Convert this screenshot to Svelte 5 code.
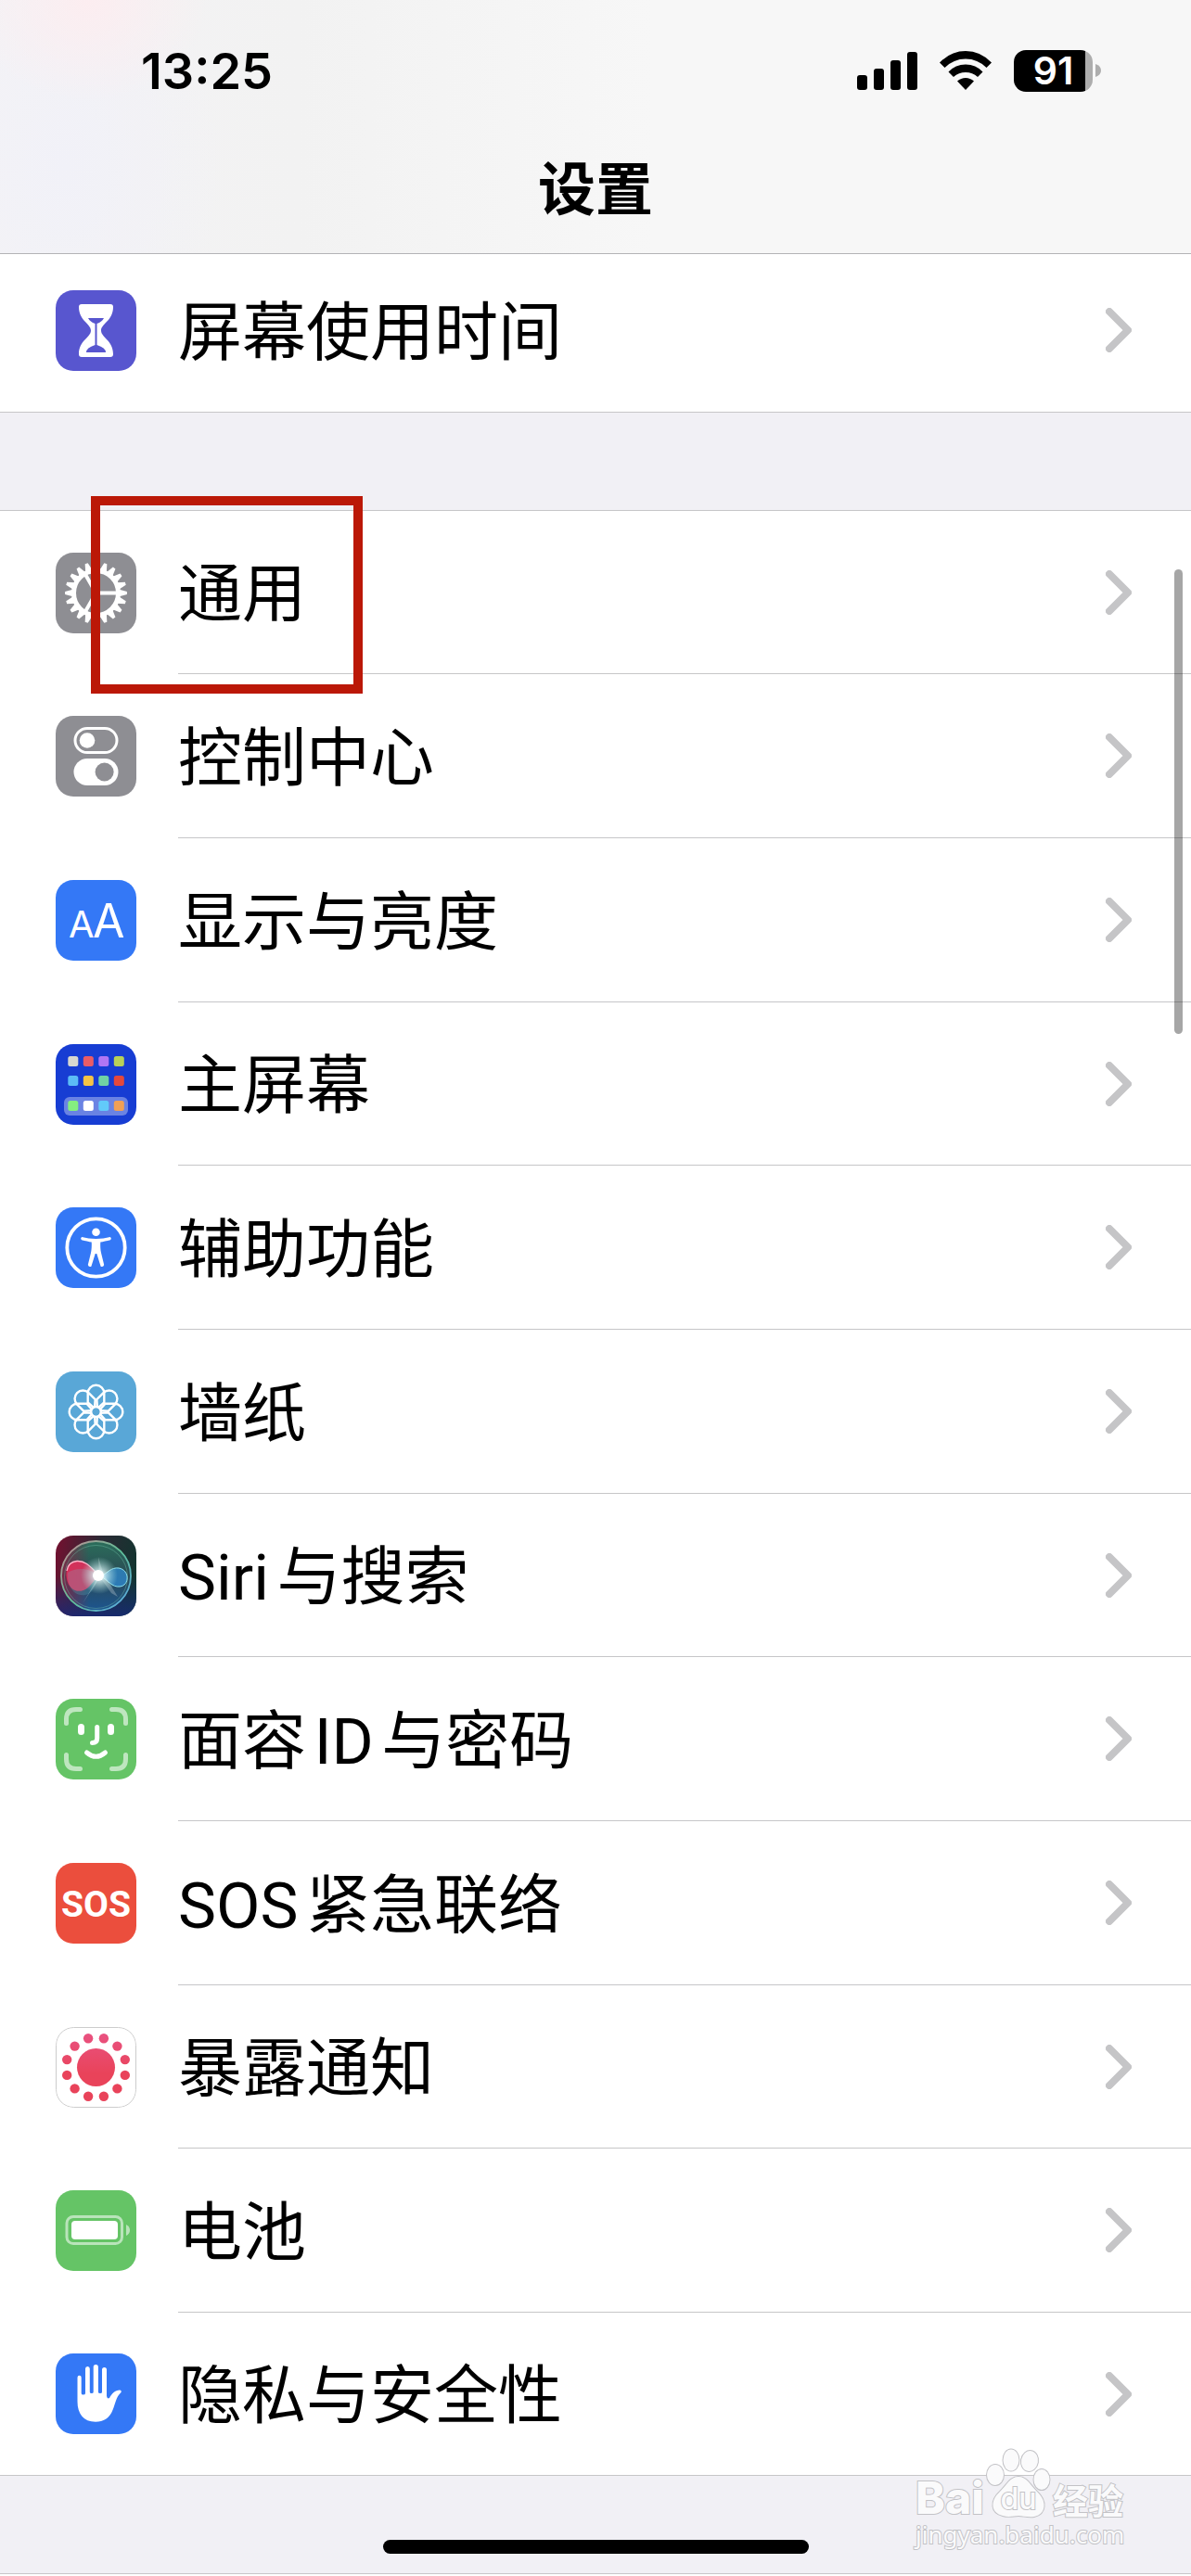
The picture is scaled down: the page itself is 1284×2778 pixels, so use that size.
<script lang="ts">
  type Item = { id: string; label: string; marked?: boolean };

  const time = "13:25";
  const battery = 91;

  const screenTime: Item[] = [{ id: "screen-time", label: "屏幕使用时间" }];

  const general: Item[] = [
    { id: "general", label: "通用", marked: true },
    { id: "control", label: "控制中心" },
    { id: "display", label: "显示与亮度" },
    { id: "home", label: "主屏幕" },
    { id: "access", label: "辅助功能" },
    { id: "wallpaper", label: "墙纸" },
    { id: "siri", label: "Siri与搜索" },
    { id: "faceid", label: "面容ID与密码" },
    { id: "sos", label: "SOS紧急联络" },
    { id: "exposure", label: "暴露通知" },
    { id: "battery", label: "电池" },
    { id: "privacy", label: "隐私与安全性" },
  ];

  const range = (n: number) => Array.from({ length: n }, (_, i) => i);

  // app tiles of the home screen icon, row by row
  const tiles = [
    { y: 13, colors: ["#d8d8d0", "#ea5c66", "#b076f4", "#b8d158"] },
    { y: 34, colors: ["#5cbcf6", "#f6c445", "#70d3a4", "#e5483b"] },
    { y: 61, colors: ["#85ee80", "#ffffff", "#62cafa", "#f0a055"] },
  ];
</script>

{#snippet glyph(id: string)}
  {#if id === "screen-time"}
    <path fill="#fff" d="M28 15H59Q62 15 62 18C62 33 49 36 49 43.5C49 51 62 54 62 69Q62 72 59 72H28Q25 72 25 69C25 54 38 51 38 43.5C38 36 25 33 25 18Q25 15 28 15Z" />
    <path fill="#5856cf" d="M35 30H52Q50 34 44.5 36V59Q54 62 54 67H33Q33 62 42.5 59V36Q37 34 35 30Z" />
  {:else if id === "general"}
    <g transform="translate(43.5 43.5)">
      {#each range(20) as i}
        <path fill="#fff" d="M25-3.8L33.4-1.6V1.6L25 3.8Z" transform="rotate({i * 18})" />
      {/each}
      <circle r="24" fill="none" stroke="#fff" stroke-width="5" />
      {#each range(3) as i}
        <path stroke="#fff" stroke-width="4" d="M0 0H23" transform="rotate({i * 120})" />
      {/each}
    </g>
  {:else if id === "control"}
    <rect x="21" y="13.5" width="45" height="26" rx="13" fill="none" stroke="#fff" stroke-width="3" />
    <circle cx="34" cy="26.5" r="8.3" fill="#fff" />
    <rect x="19.5" y="46" width="48" height="29" rx="14.5" fill="#fff" />
    <circle cx="52.6" cy="60.5" r="10" fill="#8e8e93" />
  {:else if id === "display"}
    <text class="aa" x="14" y="62" font-size="40">A</text>
    <text class="aa" x="40" y="62" font-size="50">A</text>
  {:else if id === "home"}
    <rect x="9" y="57" width="69" height="20" rx="6" fill="#fff" opacity="0.36" />
    {#each tiles as row}
      {#each row.colors as color, i}
        <rect x={13.3 + i * 16.5} y={row.y} width="11" height="11" rx="2.5" fill={color} />
      {/each}
    {/each}
  {:else if id === "access"}
    <circle cx="43.5" cy="43.5" r="31.2" fill="none" stroke="#fff" stroke-width="3.8" />
    <circle cx="43.5" cy="26.7" r="4.3" fill="#fff" />
    <path fill="#fff" d="M28.3 32C33 33 38 34 43.5 34C49 34 54 33 58.7 32Q60.8 33.4 59 35.2C55 36.3 51 37 48.3 37.5C48 41 48.3 46 49 49L52.2 62Q51.4 65 48.6 63.7L44.3 50H42.7L38.4 63.7Q35.6 65 34.8 62L38 49C38.7 46 39 41 38.7 37.5C36 37 32 36.3 28 35.2Q26.2 33.4 28.3 32Z" />
  {:else if id === "wallpaper"}
    <g transform="translate(43.5 43.5)" fill="none" stroke="#fff" stroke-width="2.4">
      {#each range(8) as i}
        <path d="M-2-4L-8.8-10V-20A8.8 8.8 0 0 1 8.8-20V-10L2-4" transform="rotate({i * 45})" />
      {/each}
      <circle r="5.4" />
    </g>
  {:else if id === "siri"}
    <defs>
      <linearGradient id="siri-back" x1="0" y1="0.3" x2="1" y2="0.5">
        <stop offset="0" stop-color="#6e1230" />
        <stop offset="0.5" stop-color="#2b2a35" />
        <stop offset="1" stop-color="#12352f" />
      </linearGradient>
      <linearGradient id="siri-low" x1="0" y1="0" x2="0" y2="1">
        <stop offset="0.5" stop-color="#17307c" stop-opacity="0" />
        <stop offset="1" stop-color="#17287c" stop-opacity="0.8" />
      </linearGradient>
      <linearGradient id="siri-rim" x1="0" y1="0" x2="1" y2="1">
        <stop offset="0" stop-color="#c98a95" />
        <stop offset="0.5" stop-color="#5fbf96" />
        <stop offset="1" stop-color="#5aa6ea" />
      </linearGradient>
      <linearGradient id="siri-orb" x1="0" y1="0" x2="0" y2="1">
        <stop offset="0" stop-color="#2b6e5a" />
        <stop offset="0.5" stop-color="#2a4a55" />
        <stop offset="1" stop-color="#1c5590" />
      </linearGradient>
      <linearGradient id="siri-side" x1="0" y1="0" x2="1" y2="0">
        <stop offset="0" stop-color="#8e1f42" stop-opacity="0.8" />
        <stop offset="0.4" stop-color="#8e1f42" stop-opacity="0" />
      </linearGradient>
      <radialGradient id="siri-glow">
        <stop offset="0" stop-color="#fff" />
        <stop offset="0.25" stop-color="#e8ffff" stop-opacity="0.8" />
        <stop offset="1" stop-color="#a8e8e0" stop-opacity="0" />
      </radialGradient>
    </defs>
    <rect width="87" height="87" fill="url(#siri-back)" />
    <rect width="87" height="87" fill="url(#siri-low)" />
    <circle cx="43.5" cy="43.5" r="37.5" fill="url(#siri-orb)" />
    <circle cx="43.5" cy="43.5" r="37.5" fill="url(#siri-side)" stroke="url(#siri-rim)" stroke-width="1.8" />
    <circle cx="43.5" cy="44.5" r="34" fill="none" stroke="#78c8b0" stroke-width="0.8" opacity="0.5" />
    <path fill="#e0305c" opacity="0.9" d="M48 43C38 34 33 27 23 27.5C14 28 10 36 12 47C14 57 22 62 30 59C38 56 40 48 48 43Z" />
    <path fill="none" stroke="#ffb5cb" stroke-width="1.4" d="M46 42C37 33 32 27 23 27.5C17 28 13 32 12 38" />
    <path fill="#64c8d8" opacity="0.22" d="M48 44C36 34 22 34 13 40C12 55 20 66 32 64C42 62 42 51 48 44Z" />
    <path fill="#2f8fd8" opacity="0.7" d="M49 44C56 40 60 34 68 35C80 37 80 54 69 55C61 56 56 48 49 44Z" />
    <path fill="none" stroke="#8fe4f2" stroke-width="1" d="M49 44C56 40 60 34 68 35C80 37 80 54 69 55C61 56 56 48 49 44Z" />
    <path fill="#fff" opacity="0.25" d="M47 43L46 23L51 40L67 66L60 62L48 45L29 73Z" />
    <circle cx="47" cy="43" r="20" fill="url(#siri-glow)" />
    <circle cx="46" cy="43" r="6" fill="#fff" />
  {:else if id === "faceid"}
    <g fill="none" stroke="#fff" stroke-width="5" stroke-linecap="round">
      <path opacity="0.58" d="M11.5 26.5V22Q11.5 11.5 22 11.5H26.5M60.5 11.5H65Q75.5 11.5 75.5 22V26.5M75.5 60.5V65Q75.5 75.5 65 75.5H60.5M26.5 75.5H22Q11.5 75.5 11.5 65V60.5" />
      <path d="M44.7 30.5V42.5Q44.7 47.5 39.5 47.5" />
      <path d="M33.5 58Q43.5 66.5 53.5 58" />
      <path stroke-width="7" d="M27.5 30.5V35.5M59.5 30.5V35.5" />
    </g>
  {:else if id === "sos"}
    <text class="sos-text" x="43.5" y="58">SOS</text>
  {:else if id === "exposure"}
    <defs>
      <linearGradient id="exposure-fill" gradientUnits="userSpaceOnUse" x1="0" y1="8" x2="0" y2="50">
        <stop offset="0" stop-color="#e95280" />
        <stop offset="1" stop-color="#e9435a" />
      </linearGradient>
    </defs>
    <rect x="0.5" y="0.5" width="86" height="86" rx="19" fill="#fff" stroke="#ccc" />
    <g fill="url(#exposure-fill)">
      <circle cx="43.5" cy="43.5" r="20.5" />
      {#each range(12) as i}
        <circle
          cx={43.5 + 32.4 * Math.sin(((i * 30 + 15) * Math.PI) / 180)}
          cy={43.5 - 32.4 * Math.cos(((i * 30 + 15) * Math.PI) / 180)}
          r="5.2"
        />
      {/each}
    </g>
  {:else if id === "battery"}
    <rect x="12" y="28.5" width="59.5" height="29" rx="7" fill="none" stroke="#fff" stroke-width="3" opacity="0.55" />
    <rect x="17" y="33" width="50" height="20" rx="4" fill="#fff" />
    <path fill="#fff" opacity="0.55" d="M76 37Q80 39 80 43T76 49Z" />
  {:else if id === "privacy"}
    <path fill="#fff" d="M23.5 26Q23.5 23.7 25.6 23.7T27.7 26V43Q27.7 44.5 29.8 44.5T32 43V16.5Q32 14 34.4 14T36.8 16.5V41.5Q36.8 43 38.8 43T40.7 41.5V14.5Q40.7 12 43.3 12T45.9 14.5V41.5Q45.9 43 48 43T50 41.5V17.5Q50 15 52.5 15T55 17.5V46Q55.5 49.5 58 48C60.5 43.5 64 39.5 69 39.5Q71.5 40 70.5 42C65 47 64.5 54 61.5 61C58 70 51.5 73.7 43 73.7C30 73.7 23.5 65 23.5 52Z" />
  {/if}
{/snippet}

{#snippet rows(items: Item[])}
  <ul class="group">
    {#each items as item}
      <li class="row">
        <a class="link" href="#{item.id}">
          <svg class="icon {item.id}" viewBox="0 0 87 87" aria-hidden="true">
            {@render glyph(item.id)}
          </svg>
          <span class="cell">
            <span class="label">{item.label}</span>
            <svg class="chevron" viewBox="0 0 28 48" aria-hidden="true">
              <path d="M4 4L24 24L4 44" />
            </svg>
          </span>
        </a>
        {#if item.marked}
          <span class="marker"></span>
        {/if}
      </li>
    {/each}
  </ul>
{/snippet}

<div class="screen">
  <header class="header">
    <div class="status">
      <span class="time">{time}</span>
      <div class="indicators">
        <svg class="signal" viewBox="0 0 65 45" aria-hidden="true">
          <rect x="0" y="27" width="11" height="16" rx="3" />
          <rect x="18" y="20" width="11" height="23" rx="3" />
          <rect x="36" y="11" width="11" height="32" rx="3" />
          <rect x="54" y="2" width="11" height="41" rx="3" />
        </svg>
        <svg class="wifi" viewBox="0 0 58 45" aria-hidden="true">
          <path d="M1 13.5Q13 1 29 1T57 13.5L51.5 19Q42 9.5 29 9.5T6.5 19Z" />
          <path d="M10.5 23.5Q18 15.5 29 15.5T47.5 23.5L42 29Q36.500 24 29 24T16 29Z" />
          <path d="M20 33.5Q24 30 29 30T38 33.5L29 43Z" />
        </svg>
        <div class="battery-box">
          <span class="level">{battery}</span>
          <svg class="nub" viewBox="0 0 6 14" aria-hidden="true">
            <path d="M0 0Q6 2 6 7T0 14Z" />
          </svg>
        </div>
      </div>
    </div>
    <h1 class="title">设置</h1>
  </header>

  <main class="content">
    {@render rows(screenTime)}
    {@render rows(general)}
    <div class="group next"></div>
  </main>

  <div class="scrollbar"></div>
  <div class="home-bar"></div>

  <svg class="watermark" viewBox="0 0 240 120" aria-label="Baidu 经验">
    <g class="paw">
      <ellipse cx="89" cy="31" rx="9" ry="11" />
      <ellipse cx="106" cy="15" rx="8.5" ry="11.5" />
      <ellipse cx="126" cy="16" rx="9" ry="11" transform="rotate(10 126 16)" />
      <ellipse cx="139" cy="36" rx="8.5" ry="11" />
      <path d="M114 33C123 33 126 41 134 49C145 59 144 73 131 76C124 77 119 75 114 75S104 77 97 75C84 72 83 59 94 49C102 41 105 33 114 33Z" />
    </g>
    <text class="brand" x="3" y="73">Bai</text>
    <text class="du" x="114" y="68">du</text>
    <text class="brand-cn" x="151" y="73">经验</text>
    <text class="site" x="3" y="105">jingyan.baidu.com</text>
  </svg>
</div>

<style>
  :global(body) {
    margin: 0;
    background: #f1f0f5;
  }

  .screen {
    position: relative;
    display: flex;
    flex-direction: column;
    min-height: 100vh;
    overflow: hidden;
    background: #f1f0f5;
    color: #000;
    font-family: Inter, "Noto Sans CJK SC", sans-serif;
  }

  .header {
    position: relative;
    z-index: 1;
    box-sizing: border-box;
    height: 274px;
    border-bottom: 1px solid #b3b3b6;
    background:
      radial-gradient(ellipse 130px 110px at 95px 0, #fcedf0, transparent),
      radial-gradient(ellipse 170px 240px at 70px 180px, #f1f1f8, transparent),
      linear-gradient(90deg, #f4f3f5, #f2f2f2 25%, #f7f7f7 55%);
  }

  .status {
    display: flex;
    align-items: center;
    justify-content: space-between;
    height: 76px;
    padding: 38px 97px 0 152px;
  }

  .time {
    padding-top: 2px;
    font-size: 54px;
    line-height: 76px;
    font-weight: 600;
  }

  .indicators {
    display: flex;
    align-items: center;
    gap: 23px;
  }

  .signal {
    width: 65px;
    height: 45px;
  }

  .wifi {
    width: 58px;
    height: 45px;
  }

  .battery-box {
    display: flex;
    align-items: center;
    gap: 3px;
  }

  .level {
    width: 85px;
    height: 45px;
    border-radius: 13px;
    background: linear-gradient(90deg, #000 77px, #adadad 77px);
    color: #fff;
    font-size: 41px;
    line-height: 45px;
    font-weight: 600;
    text-align: center;
  }

  .nub {
    width: 6px;
    height: 14px;
    fill: #adadad;
  }

  .title {
    margin: 46px 0 0;
    font-size: 62px;
    line-height: 90px;
    font-weight: 700;
    text-align: center;
  }

  .content {
    display: flex;
    flex: 1;
    flex-direction: column;
    gap: 105px;
    /* the list is scrolled a little way under the header */
    margin-top: -7px;
  }

  .group {
    margin: 0;
    padding: 0;
    list-style: none;
    border-top: 1px solid #c6c6c8;
    border-bottom: 1px solid #c6c6c8;
    background: #fff;
  }

  .next {
    flex: 1;
    border-bottom: none;
  }

  .row {
    position: relative;
    height: 177px;
  }

  .row:nth-child(3n + 1) {
    height: 176px;
  }

  .row:last-child {
    height: 175px;
  }

  .row:only-child {
    height: 176px;
  }

  .link {
    display: flex;
    align-items: center;
    height: 100%;
    padding-left: 60px;
    color: inherit;
    text-decoration: none;
  }

  .icon {
    flex: none;
    width: 87px;
    height: 87px;
    border-radius: 19px;
  }

  .cell {
    display: flex;
    flex: 1;
    align-items: center;
    justify-content: space-between;
    box-sizing: border-box;
    height: 100%;
    margin-left: 45px;
    padding-right: 64px;
    border-bottom: 1px solid #c6c6c8;
  }

  .row:last-child .cell {
    border-bottom: none;
  }

  .label {
    padding-top: 7px;
    font-family: Roboto, "Noto Sans CJK SC", sans-serif;
    font-size: 69px;
    line-height: 100px;
    text-autospace: normal;
  }

  .chevron {
    width: 28px;
    height: 48px;
    fill: none;
    stroke: #c5c5c7;
    stroke-width: 8;
    stroke-linecap: round;
    stroke-linejoin: round;
  }

  .marker {
    position: absolute;
    top: -16px;
    left: 98px;
    box-sizing: border-box;
    width: 293px;
    height: 213px;
    border: 10px solid #bb1807;
  }

  .screen-time {
    background: #5856cf;
  }

  .general,
  .control {
    background: #8e8e93;
  }

  .display,
  .access,
  .privacy {
    background: #3478f6;
  }

  .home {
    background: #173dd3;
  }

  .wallpaper {
    background: #59a7d7;
  }

  .faceid,
  .battery {
    background: #65c466;
  }

  .sos {
    background: #eb4e3d;
  }

  .aa {
    fill: #fff;
    font-weight: 400;
  }

  .sos-text {
    fill: #fff;
    font-family: Roboto, sans-serif;
    font-size: 39px;
    font-weight: 700;
    text-anchor: middle;
  }

  .scrollbar {
    position: absolute;
    z-index: 2;
    top: 614px;
    right: 9px;
    width: 9px;
    height: 501px;
    border-radius: 5px;
    background: rgba(0, 0, 0, 0.35);
  }

  .home-bar {
    position: absolute;
    bottom: 24px;
    left: 50%;
    width: 459px;
    height: 15px;
    margin-left: -229px;
    border-radius: 8px;
    background: #000;
  }

  .watermark {
    position: absolute;
    right: 60px;
    bottom: 20px;
    width: 240px;
    height: 120px;
    fill: #fafafb;
    stroke: #c2c2c6;
    stroke-width: 2;
    paint-order: stroke;
  }

  .brand {
    font-size: 48px;
    font-weight: 800;
  }

  .du {
    font-size: 32px;
    font-weight: 500;
    text-anchor: middle;
  }

  .brand-cn {
    font-size: 38px;
    font-weight: 700;
  }

  .site {
    font-family: "Noto Sans", sans-serif;
    font-size: 26px;
  }
</style>
